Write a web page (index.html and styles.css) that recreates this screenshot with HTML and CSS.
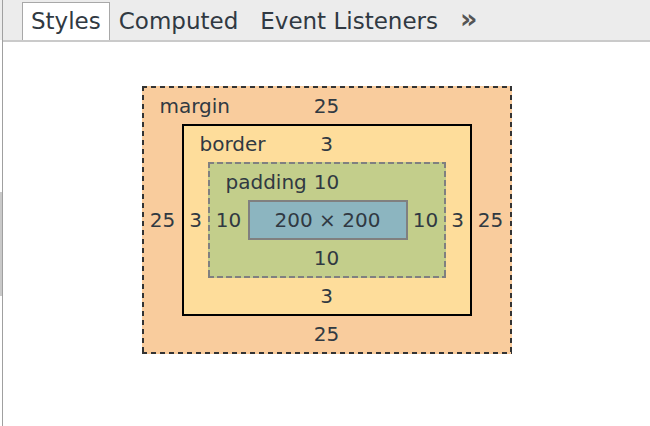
FILE: index.html
```html
<!DOCTYPE html>
<html>
<head>
<meta charset="utf-8">
<link rel="stylesheet" href="styles.css">
</head>
<body>
<div class="app">
  <div class="gutter">
    <div class="gutter-top"></div>
    <div class="thumb"></div>
  </div>
  <div class="divider"></div>
  <div class="main">
    <div class="tabbar">
      <div class="tab active">Styles</div>
      <div class="tab">Computed</div>
      <div class="tab">Event Listeners</div>
      <div class="tab more">»</div>
    </div>
    <div class="content">
      <div class="box margin-box">
        <div class="top"><span class="label">margin</span><span class="val">25</span></div>
        <div class="side">25</div>
        <div class="box border-box">
          <div class="top"><span class="label">border</span><span class="val">3</span></div>
          <div class="side">3</div>
          <div class="box padding-box">
            <div class="top"><span class="label">padding</span><span class="val">10</span></div>
            <div class="side">10</div>
            <div class="content-box">200 × 200</div>
            <div class="side">10</div>
            <div class="bottom">10</div>
          </div>
          <div class="side">3</div>
          <div class="bottom">3</div>
        </div>
        <div class="side">25</div>
        <div class="bottom">25</div>
      </div>
    </div>
  </div>
</div>
</body>
</html>
```
FILE: styles.css
```css
html, body {
  margin: 0;
  padding: 0;
  background: #fff;
}
body {
  width: 650px;
  height: 426px;
  overflow: hidden;
  font-family: "DejaVu Sans", "Liberation Sans", sans-serif;
  color: #303942;
}
.app {
  display: flex;
  height: 426px;
}
.gutter {
  width: 2px;
  display: flex;
  flex-direction: column;
}
.gutter-top {
  height: 40px;
  background: #ececec;
}
.thumb {
  margin-top: 152px;
  height: 104px;
  background: #c9c9c9;
}
.divider {
  width: 1px;
  background: #a0a0a0;
}
.main {
  flex: 1;
  display: flex;
  flex-direction: column;
}
.tabbar {
  height: 40px;
  background: #ececec;
  border-bottom: 2px solid #cacaca;
  display: flex;
  align-items: flex-end;
  padding-left: 19px;
}
.tab {
  height: 38px;
  box-sizing: border-box;
  border: 1px solid transparent;
  border-bottom: 0;
  padding: 0 8px;
  margin-right: 4px;
  font-size: 23px;
  line-height: 36px;
  color: #303942;
  white-space: nowrap;
}
.tab.active {
  background: #fff;
  border-color: #a8a8a8;
  margin-right: 0;
}
.tab.more {
  color: #555;
  font-weight: bold;
  font-size: 27px;
  line-height: 32px;
  margin-right: 0;
}
.content {
  display: flex;
  justify-content: center;
  align-items: flex-start;
  padding-top: 44px;
}
.box {
  display: grid;
  font-size: 20px;
}
.top {
  grid-column: 1 / -1;
  display: grid;
  grid-template-columns: 1fr auto 1fr;
  align-items: center;
}
.label {
  justify-self: start;
  padding-left: 16px;
}
.val {
  text-align: center;
}
.side {
  align-self: center;
  text-align: center;
}
.bottom {
  grid-column: 1 / -1;
  align-self: center;
  text-align: center;
}
.margin-box {
  grid-template-columns: 38px auto 38px;
  grid-template-rows: 36px auto 36px;
  border: 2px solid transparent;
  background:
    repeating-linear-gradient(90deg, #333 0 5px, transparent 5px 9px) top left / 100% 2px no-repeat border-box,
    repeating-linear-gradient(90deg, #333 0 5px, transparent 5px 9px) bottom left / 100% 2px no-repeat border-box,
    repeating-linear-gradient(180deg, #333 0 5px, transparent 5px 9px) top left / 2px 100% no-repeat border-box,
    repeating-linear-gradient(180deg, #333 0 5px, transparent 5px 9px) top right / 2px 100% no-repeat border-box,
    #f9cc9d;
}
.border-box {
  grid-template-columns: 24px auto 24px;
  grid-template-rows: 36px auto 36px;
  border: 2px solid #000;
  background: #fedd9b;
}
.padding-box {
  grid-template-columns: 38px auto 36px;
  grid-template-rows: 36px auto 36px;
  border: 2px solid transparent;
  background:
    repeating-linear-gradient(90deg, #808080 0 6px, transparent 6px 9px) top left / 100% 2px no-repeat border-box,
    repeating-linear-gradient(90deg, #808080 0 6px, transparent 6px 9px) bottom left / 100% 2px no-repeat border-box,
    repeating-linear-gradient(180deg, #808080 0 6px, transparent 6px 9px) top left / 2px 100% no-repeat border-box,
    repeating-linear-gradient(180deg, #808080 0 6px, transparent 6px 9px) top right / 2px 100% no-repeat border-box,
    #c3ce8b;
}
.content-box {
  width: 156px;
  height: 36px;
  line-height: 36px;
  text-align: center;
  border: 2px solid #808080;
  background: #8cb5c0;
  white-space: nowrap;
}
```
